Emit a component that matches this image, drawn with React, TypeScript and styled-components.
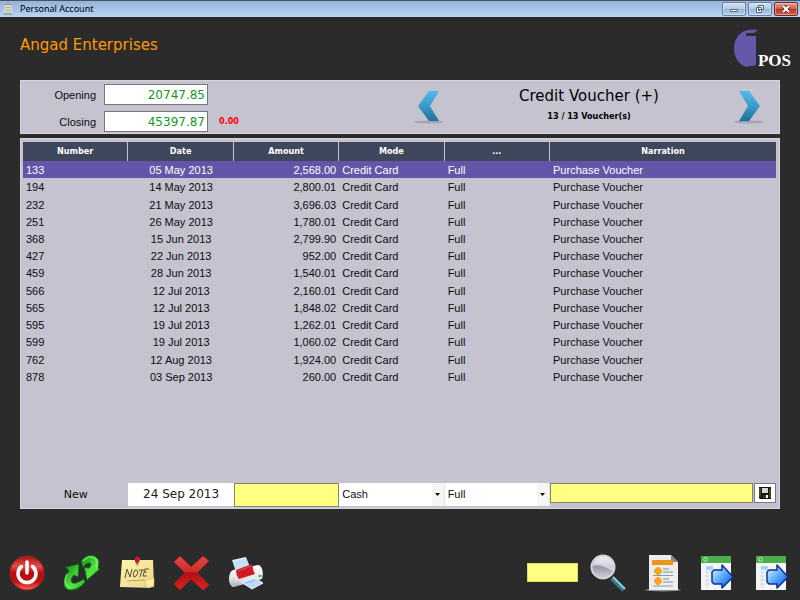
import React from 'react';
import styled, { createGlobalStyle } from 'styled-components';

const sans = '"Liberation Sans", Arial, sans-serif';
const wide = '"DejaVu Sans", Verdana, sans-serif';
const small = '"DejaVu Sans Condensed", "DejaVu Sans", Tahoma, sans-serif';

const GlobalStyle = createGlobalStyle`
  *, *::before, *::after { box-sizing: border-box; }
  body { margin: 0; background: #2b2b2b; }
  svg { display: block; }
`;

const Window = styled.div`
  display: flex;
  flex-direction: column;
  min-height: 100vh;
  background: #2b2b2b;
  color: #0c0c0e;
  font: 11px/17px ${sans};
`;

const TitleBar = styled.header`
  display: flex;
  align-items: center;
  gap: 8px;
  height: 17px;
  padding: 0 2px 1px 4px;
  border-top: 1px solid #4a5361;
  background: linear-gradient(#97b3d8, #a9c6e8 60%, #bad5f2);
  font: 9px/15px "Noto Sans", "Open Sans", sans-serif;
  color: #000;
`;

const WindowButtons = styled.div`
  display: flex;
  gap: 2px;
  margin-left: auto;
`;

const WindowButton = styled.button<{ $close?: boolean }>`
  display: grid;
  place-items: center;
  width: 24px;
  height: 14px;
  padding: 0;
  border: 1px solid ${p => (p.$close ? '#6d2a2a' : '#6580a5')};
  border-radius: 2px;
  background: ${p =>
    p.$close
      ? 'linear-gradient(#e3a193, #d4614b 45%, #bc3420 50%, #d2614a)'
      : 'linear-gradient(#cfdff2, #b9cfe9 45%, #98b5d8 50%, #b5cfec)'};
  box-shadow: inset 0 0 0 1px rgba(255, 255, 255, 0.35);
`;

const Brand = styled.div`
  display: flex;
  justify-content: space-between;
  align-items: flex-start;
  height: 63px;
  padding: 12px 9px 0 20px;
`;

const Heading = styled.h1`
  margin: 0;
  font: 15px/32px ${wide};
  color: #ff9900;
`;

const Logo = styled.div`
  display: flex;
  align-items: flex-end;
  font: bold 17px/13px "Liberation Serif", Georgia, serif;
  color: #fff;
`;

const Main = styled.main`
  display: flex;
  flex: 1;
  flex-direction: column;
  gap: 4px;
  padding: 0 20px;
`;

const Panel = styled.section`
  background: #c4c3cf;
  border: 1px solid #d6d5dd;
`;

const Summary = styled(Panel)`
  display: flex;
  justify-content: space-between;
  padding: 3px 15px 1px 2px;
`;

const Balances = styled.div`
  display: grid;
  grid-template-columns: 73px 104px auto;
  grid-auto-rows: 21px;
  gap: 6px 8px;
  align-items: center;
`;

const BalanceLabel = styled.label`
  text-align: right;
  padding-top: 2px;
`;

const BalanceInput = styled.input`
  width: 100%;
  height: 21px;
  padding: 0 2px;
  border: 1px solid #77777d;
  background: #fff;
  font: 12px/19px ${wide};
  color: #119a1c;
  text-align: right;
`;

const Difference = styled.span`
  grid-column: 3;
  padding-left: 3px;
  font: bold 9px/17px ${small};
  color: #ff0010;
`;

const Pager = styled.div`
  display: flex;
  justify-content: space-between;
  align-items: flex-start;
  width: 350px;
`;

const PageButton = styled.button`
  margin-top: 6px;
  padding: 0;
  border: 0;
  background: none;
`;

const PagerText = styled.div`
  padding-top: 2px;
  text-align: center;
`;

const VoucherTitle = styled.h2`
  margin: 0;
  font: 15px/20px ${wide};
  color: #000;
`;

const VoucherCount = styled.div`
  font: bold 9px/20px ${small};
  color: #000;
`;

const Ledger = styled(Panel)`
  display: flex;
  flex: 1;
  flex-direction: column;
  justify-content: space-between;
  padding: 3px 3px 1px 2px;
`;

const Table = styled.table`
  width: 100%;
  height: 243px;
  table-layout: fixed;
  border-collapse: separate;
  border-spacing: 0;
`;

const HeadCell = styled.th`
  width: 14%;
  height: 19px;
  padding: 0;
  border-right: 1px solid #c4c3cf;
  background: #3f475c;
  font: bold 9px/17px ${small};
  color: #fff;

  &:last-child {
    width: auto;
    border-right: 0;
  }
`;

const Row = styled.tr<{ $selected: boolean }>`
  background: ${p => (p.$selected ? '#6355a7' : 'transparent')};
  color: ${p => (p.$selected ? '#fff' : 'inherit')};
`;

const Cell = styled.td<{ $align?: 'center' | 'right' }>`
  padding: 2px 3px 0;
  line-height: 15px;
  text-align: ${p => p.$align ?? 'left'};
  white-space: nowrap;
`;

const EntryForm = styled.form`
  display: grid;
  grid-template-columns: repeat(5, 14%) 1fr 23px;
  align-items: start;
`;

const EntryLabel = styled.label`
  font: 11px/23px ${wide};
  text-align: center;
`;

const DateInput = styled.input`
  width: 100%;
  height: 23px;
  padding: 0;
  border: 0;
  background: #fff;
  font: 12px/23px ${wide};
  color: #1c1c1c;
  text-align: center;
`;

const YellowInput = styled.input<{ $height: number }>`
  width: 100%;
  height: ${p => p.$height}px;
  padding: 0 3px;
  border: 1px solid #85856a;
  background: #ffff80;
  font: 11px/17px ${sans};
`;

const SelectBox = styled.div`
  position: relative;
  border-right: 1px solid #e4e4e8;

  svg {
    position: absolute;
    right: 4px;
    top: 10px;
    pointer-events: none;
  }
`;

const Select = styled.select`
  appearance: none;
  display: block;
  width: 100%;
  height: 23px;
  padding: 0 14px 0 3px;
  border: 0;
  border-radius: 0;
  background: linear-gradient(90deg, #fff calc(100% - 12px), #f6f6f6 0);
  font: 11px/23px ${sans};
  color: #111;
`;

const SaveButton = styled.button`
  display: grid;
  place-items: center;
  height: 20px;
  margin-left: 1px;
  padding: 0;
  border: 1px solid #77777d;
  background: #fff;
`;

const Toolbar = styled.footer`
  display: flex;
  justify-content: space-between;
  align-items: center;
  height: 91px;
  padding: 36px 9px 0;
`;

const ToolGroup = styled.div`
  display: flex;
  align-items: center;
  gap: 19px;
`;

const SearchBox = styled.div`
  display: flex;
  align-items: center;
  gap: 12px;
`;

const ToolButton = styled.button`
  width: 36px;
  height: 38px;
  padding: 0;
  border: 0;
  background: none;
`;

const SearchInput = styled.input`
  width: 51px;
  height: 19px;
  padding: 0 3px;
  border: 1px solid #dcdc70;
  background: #ffff80;
  font: 11px/17px ${sans};
`;

const vouchers = [
  ['133', '05 May 2013', '2,568.00'],
  ['194', '14 May 2013', '2,800.01'],
  ['232', '21 May 2013', '3,696.03'],
  ['251', '26 May 2013', '1,780.01'],
  ['368', '15 Jun 2013', '2,799.90'],
  ['427', '22 Jun 2013', '952.00'],
  ['459', '28 Jun 2013', '1,540.01'],
  ['566', '12 Jul 2013', '2,160.01'],
  ['565', '12 Jul 2013', '1,848.02'],
  ['595', '19 Jul 2013', '1,262.01'],
  ['599', '19 Jul 2013', '1,060.02'],
  ['762', '12 Aug 2013', '1,924.00'],
  ['878', '03 Sep 2013', '260.00'],
];

const columns = ['Number', 'Date', 'Amount', 'Mode', '...', 'Narration'];

const PaperIcon = () => (
  <svg width="8" height="12" viewBox="0 0 8 12">
    <path d="M0 1h8v10H0z" fill="#d9dccf" />
    <path d="M0 1h8v1H0z" fill="#8c9485" />
    <path d="M1 4.500h6M1 6.500h6M1 8.500h6" stroke="#b4b9a6" />
    <path d="M0 11h8" stroke="#777d73" />
  </svg>
);

const LogoMark = () => (
  <svg width="24" height="38" viewBox="0 0 24 38">
    <path
      d="M24 1l-4 3h-8v3h10v28c-1 3-5 1-10 3C4 35 0 28 0 19 0 9 7 2 14 1c4-1 7-.5 10 0z"
      fill="#6558ab"
    />
  </svg>
);

const Chevron = ({ right }: { right?: boolean }) => {
  const id = right ? 'chevron-right' : 'chevron-left';
  return (
    <svg width="30" height="34" viewBox="0 0 30 34">
      <defs>
        <linearGradient id={id} x2="0" y2="1">
          <stop offset="0" stopColor="#55b8ec" />
          <stop offset=".5" stopColor="#3a9ccb" />
          <stop offset="1" stopColor="#1c7198" />
        </linearGradient>
      </defs>
      <ellipse cx="15" cy="32" rx="15" ry="1.500" fill="#9a97a0" opacity=".75" />
      <path
        d={right ? 'M5 1h10l11 15-11 15H5l9-15z' : 'M25 1H15L4 16l11 15h10l-9-15z'}
        fill={`url(#${id})`}
      />
    </svg>
  );
};

const DropArrow = () => (
  <svg width="5" height="3" viewBox="0 0 5 3">
    <path d="M0 0h5L2.500 3z" fill="#111" />
  </svg>
);

const DiskIcon = () => (
  <svg width="12" height="12" viewBox="0 0 12 12">
    <path d="M0 0h12v12H1l-1-1z" fill="#151510" />
    <path d="M1 1v9M11 2v9" stroke="#77772a" />
    <path d="M3 1h6v5H3z" fill="#d5d5d8" />
    <path d="M4 8h5v3H4z" fill="#33332c" />
    <path d="M7 8h2v3H7z" fill="#fff" />
  </svg>
);

const PowerIcon = () => (
  <svg width="36" height="38" viewBox="0 0 36 38">
    <defs>
      <linearGradient id="power" x2="0" y2="1">
        <stop offset="0" stopColor="#9d1515" />
        <stop offset=".3" stopColor="#ed4b46" />
        <stop offset=".5" stopColor="#b70b0d" />
        <stop offset=".75" stopColor="#bd1112" />
        <stop offset="1" stopColor="#ff625a" />
      </linearGradient>
    </defs>
    <circle cx="18" cy="19" r="17" fill="url(#power)" stroke="#a12222" />
    <path d="M12.500 12.500A9 9 0 1 0 23.500 12.500" fill="none" stroke="#fff" strokeWidth="3.500" strokeLinecap="round" />
    <path d="M18 8v11" stroke="#fff" strokeWidth="3.500" strokeLinecap="round" />
  </svg>
);

const RefreshIcon = () => (
  <svg width="36" height="38" viewBox="0 0 36 38">
    <defs>
      <linearGradient id="leaf" x2="1" y2="1">
        <stop offset="0" stopColor="#1a8f17" />
        <stop offset=".3" stopColor="#2fb32a" />
        <stop offset=".6" stopColor="#5be64b" />
        <stop offset="1" stopColor="#1fa71f" />
      </linearGradient>
    </defs>
    <g fill="url(#leaf)" stroke="#0a700d" strokeLinejoin="round">
      <path d="M2 13l13-3-1 13-4-2c-3 3-4 7-1 8 3 1 7-2 11-4l1 3c-4 6-13 10-18 7-5-3-4-11 2-18z" />
      <path d="M17 7c4-5 9-7 13-5 5 2 6 6 4 12l2 1-13 11-3-13 5 1c2-2 3-5 0-5-2 0-4 2-6 4z" />
    </g>
    <path d="M19 7c4-4 8-5 11-3 4 2 4 6 2 11M3 20c-3 6-2 11 2 13" fill="none" stroke="#8df476" strokeWidth="1.500" opacity=".7" />
  </svg>
);

const NoteIcon = () => (
  <svg width="36" height="38" viewBox="0 0 36 38">
    <defs>
      <linearGradient id="note" x2="1" y2="1">
        <stop offset="0" stopColor="#fff3ae" />
        <stop offset="1" stopColor="#ecd685" />
      </linearGradient>
    </defs>
    <path d="M3 6l31 0 1 27-34-1z" fill="url(#note)" />
    <path d="M1 31l23 1 11 2-34-1z" fill="#f5e2a0" />
    <path d="M26 27l9-3v8l-7 2z" fill="#fff0a8" stroke="#caaf5c" strokeWidth=".5" />
    <path
      d="M6 24l2-9 3 8 2-8M16 16q-3 4-1 7 3 0 4-5-1-3-3-2M20 16h6M23 16l-2 7M30 15h-4l-2 7h4M25 18h3"
      fill="none"
      stroke="#595139"
    />
    <path d="M8 27l18-1" stroke="#b3a56f" />
    <path d="M17 9l2 3" stroke="#777" />
    <path d="M16 4c2-3 6-1 5 2l-2 4-3-2z" fill="#c31932" />
  </svg>
);

const DeleteIcon = () => (
  <svg width="36" height="38" viewBox="0 0 36 38">
    <defs>
      <linearGradient id="cross" x2="0" y2="1">
        <stop offset="0" stopColor="#dd4d4b" />
        <stop offset=".46" stopColor="#cf2929" />
        <stop offset=".5" stopColor="#ad1113" />
        <stop offset="1" stopColor="#e02523" />
      </linearGradient>
    </defs>
    <path d="M6 2l11 11L29 2l6 5-12 12 12 12-6 5-12-11L6 36l-6-6 11-11L0 8z" fill="url(#cross)" stroke="#b11c1d" strokeLinejoin="round" />
  </svg>
);

const PrinterIcon = () => (
  <svg width="36" height="38" viewBox="0 0 36 38">
    <defs>
      <linearGradient id="printer" x2="0" y2="1">
        <stop offset="0" stopColor="#fff" />
        <stop offset=".6" stopColor="#e6e7ea" />
        <stop offset="1" stopColor="#a9abb2" />
      </linearGradient>
    </defs>
    <path d="M3 6l14-3 4 10-14 5z" fill="#c5e0fa" />
    <path d="M4 7l12-3" stroke="#eef8ff" />
    <path d="M4 16l25-5c4 0 6 8 4 14L5 33c-6 0-7-14-1-17z" fill="url(#printer)" />
    <path d="M4 24c1 3 1 6 0 9" fill="none" stroke="#c5c6cb" />
    <path d="M7 16l16-6c1 4 1 7 3 10l-16 5c-2-3-3-5-3-9z" fill="#cf1a22" />
    <path d="M9 17l13-5" stroke="#e75254" />
    <path d="M12 28l14-4 8 5-11 6z" fill="#b9dbf8" stroke="#edf8ff" />
    <path d="M17 29l9-3" stroke="#8eb5df" />
    <ellipse cx="31" cy="22" rx="2" ry="1" fill="#28c744" />
  </svg>
);

const MagnifierIcon = () => (
  <svg width="36" height="38" viewBox="0 0 36 38">
    <defs>
      <linearGradient id="lens" x2="0" y2="1">
        <stop offset="0" stopColor="#f4f4fb" />
        <stop offset=".5" stopColor="#9797a6" />
        <stop offset="1" stopColor="#d6d6df" />
      </linearGradient>
    </defs>
    <path d="M22 24l12 12" stroke="#347889" strokeWidth="5" />
    <path d="M23 23l12 12" stroke="#93cbd5" strokeWidth="2" />
    <circle cx="13" cy="13" r="11.500" fill="url(#lens)" stroke="#d6d1db" strokeWidth="2" />
    <path d="M3 12C9 9 16 14 23 17 25 5 18 3 13 3 8 3 4 6 3 12z" fill="#eeeef6" opacity=".65" />
  </svg>
);

const ReportIcon = () => (
  <svg width="36" height="38" viewBox="0 0 36 38">
    <ellipse cx="18" cy="36" rx="18" ry="1.500" fill="#88888a" />
    <path d="M4 1h22l7 7v28H4z" fill="#ededf0" />
    <path d="M26 1l7 7h-7z" fill="#85858c" />
    <path d="M7 6h21v5H7z" fill="#e9941b" />
    <path d="M12 13h2l3 3v2l-3 3h-2l-3-3v-2zM12 23h2l3 3v2l-3 3h-2l-3-3v-2z" fill="#faa31f" />
    <path d="M18 15h6M18 18h10M18 25h6M18 28h10" stroke="#77949c" />
    <path d="M8 21.500h20M8 32h20" stroke="#81a1a8" />
  </svg>
);

const ExportIcon = ({ id }: { id: string }) => (
  <svg width="36" height="38" viewBox="0 0 36 38">
    <defs>
      <linearGradient id={id} x2="1" y2="1">
        <stop offset="0" stopColor="#f0faff" />
        <stop offset=".5" stopColor="#55acfa" />
        <stop offset="1" stopColor="#064ce1" />
      </linearGradient>
    </defs>
    <path d="M1 2h30v34H1z" fill="#f4f6f5" />
    <path d="M1 2h30v7H1z" fill="#4cae4a" />
    <path d="M4 4h3v3H4z" fill="#2c8e36" stroke="#c0f0b6" />
    <path d="M6 12h7v4H6z" fill="#a5d4fc" />
    <path d="M7 18v16M5 18h5M5 22h5M5 26h5M5 30h5" stroke="#d0d8dd" />
    <path d="M14 16h8v-5l11 12-11 11v-4h-8l-2-2V18z" fill={`url(#${id})`} stroke="#0c2c9d" strokeWidth="1.500" strokeLinejoin="round" />
  </svg>
);

export default function App() {
  return (
    <Window>
      <GlobalStyle />
      <TitleBar>
        <PaperIcon />
        Personal Account
        <WindowButtons>
          <WindowButton aria-label="Minimize">
            <svg width="10" height="8" viewBox="0 0 10 8">
              <path d="M1.500 4.500h7v2h-7z" fill="#fff" stroke="#596579" />
            </svg>
          </WindowButton>
          <WindowButton aria-label="Restore">
            <svg width="10" height="10" viewBox="0 0 10 10">
              <path d="M3.500 1.500h5v4h-5zM1.500 3.500h5v5h-5z" fill="#fff" stroke="#596579" />
              <path d="M3 5h2v2H3z" fill="#596579" />
            </svg>
          </WindowButton>
          <WindowButton $close aria-label="Close">
            <svg width="10" height="8" viewBox="0 0 10 8">
              <path d="M2 1l6 6M8 1L2 7" stroke="#6b3437" strokeWidth="4" />
              <path d="M2 1l6 6M8 1L2 7" stroke="#fff" strokeWidth="2" />
            </svg>
          </WindowButton>
        </WindowButtons>
      </TitleBar>

      <Brand>
        <Heading>Angad Enterprises</Heading>
        <Logo>
          <LogoMark />
          POS
        </Logo>
      </Brand>

      <Main>
        <Summary>
          <Balances>
            <BalanceLabel htmlFor="opening">Opening</BalanceLabel>
            <BalanceInput id="opening" readOnly value="20747.85" />
            <span />
            <BalanceLabel htmlFor="closing">Closing</BalanceLabel>
            <BalanceInput id="closing" readOnly value="45397.87" />
            <Difference>0.00</Difference>
          </Balances>
          <Pager>
            <PageButton aria-label="Previous voucher type"><Chevron /></PageButton>
            <PagerText>
              <VoucherTitle>Credit Voucher (+)</VoucherTitle>
              <VoucherCount>13 / 13 Voucher(s)</VoucherCount>
            </PagerText>
            <PageButton aria-label="Next voucher type"><Chevron right /></PageButton>
          </Pager>
        </Summary>

        <Ledger>
          <Table>
            <thead>
              <tr>{columns.map(c => <HeadCell key={c} scope="col">{c}</HeadCell>)}</tr>
            </thead>
            <tbody>
              {vouchers.map(([number, date, amount], i) => (
                <Row key={number} $selected={i === 0}>
                  <Cell>{number}</Cell>
                  <Cell $align="center">{date}</Cell>
                  <Cell $align="right">{amount}</Cell>
                  <Cell>Credit Card</Cell>
                  <Cell>Full</Cell>
                  <Cell>Purchase Voucher</Cell>
                </Row>
              ))}
            </tbody>
          </Table>

          <EntryForm onSubmit={e => e.preventDefault()}>
            <EntryLabel htmlFor="entry-date">New</EntryLabel>
            <DateInput id="entry-date" defaultValue="24 Sep 2013" />
            <YellowInput $height={24} aria-label="Amount" />
            <SelectBox>
              <Select aria-label="Mode"><option>Cash</option><option>Credit Card</option></Select>
              <DropArrow />
            </SelectBox>
            <SelectBox>
              <Select aria-label="Settlement"><option>Full</option></Select>
              <DropArrow />
            </SelectBox>
            <YellowInput $height={20} aria-label="Narration" />
            <SaveButton type="submit" aria-label="Save"><DiskIcon /></SaveButton>
          </EntryForm>
        </Ledger>
      </Main>

      <Toolbar>
        <ToolGroup>
          <ToolButton aria-label="Exit"><PowerIcon /></ToolButton>
          <ToolButton aria-label="Refresh"><RefreshIcon /></ToolButton>
          <ToolButton aria-label="Note"><NoteIcon /></ToolButton>
          <ToolButton aria-label="Delete"><DeleteIcon /></ToolButton>
          <ToolButton aria-label="Print"><PrinterIcon /></ToolButton>
        </ToolGroup>
        <ToolGroup>
          <SearchBox>
            <SearchInput aria-label="Search" />
            <ToolButton aria-label="Find"><MagnifierIcon /></ToolButton>
          </SearchBox>
          <ToolButton aria-label="Report"><ReportIcon /></ToolButton>
          <ToolButton aria-label="Export voucher"><ExportIcon id="export-voucher" /></ToolButton>
          <ToolButton aria-label="Export list"><ExportIcon id="export-list" /></ToolButton>
        </ToolGroup>
      </Toolbar>
    </Window>
  );
}
